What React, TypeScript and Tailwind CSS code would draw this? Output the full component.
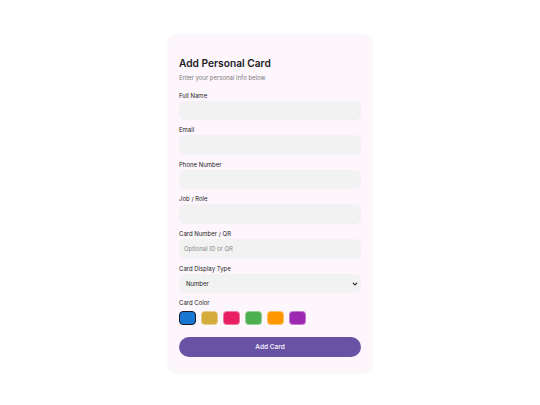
import React, { useState } from 'react';

const colors = ['#1976d2', '#d4ac3c', '#e91e63', '#4caf50', '#ff9800', '#9c27b0'];

const fields = [
  { label: 'Full Name', placeholder: '' },
  { label: 'Email', placeholder: '' },
  { label: 'Phone Number', placeholder: '' },
  { label: 'Job / Role', placeholder: '' },
  { label: 'Card Number / QR', placeholder: 'Optional ID or QR' },
];

export default function App() {
  const [selected, setSelected] = useState(0);

  return (
    <div
      className="w-full h-screen bg-white flex items-center justify-center"
      style={{ fontFamily: 'Inter, "Noto Sans", sans-serif' }}
    >
      <div className="w-[202px] h-[336px] bg-[#fdf6fd] rounded-[8px] shadow-[0_1px_4px_rgba(0,0,0,0.08)] px-[10px] pt-[21px] pb-[13px] flex flex-col">
        <h1 className="text-[10.2px] leading-[14px] font-semibold text-[#1c1b1f]">Add Personal Card</h1>
        <p className="mt-[3px] text-[6px] leading-[10px] text-[#7a7a7a]">Enter your personal info below</p>

        <div className="mt-[8px] flex flex-col">
          {fields.map((f) => (
            <div key={f.label} className="flex flex-col mb-[5.17px]">
              <label className="text-[6px] leading-[10px] text-[#222]">{f.label}</label>
              <div className="h-[19.5px] rounded-[6px] bg-[#f2f2f2] flex items-center px-[5px]">
                <span className="text-[6px] text-[#8a8a8a]">{f.placeholder}</span>
              </div>
            </div>
          ))}

          <div className="flex flex-col mb-[5.17px]">
            <label className="text-[6px] leading-[10px] text-[#222]">Card Display Type</label>
            <div className="h-[19.5px] rounded-[6px] bg-[#f2f2f2] flex items-center justify-between pl-[7px] pr-[3px]">
              <span className="text-[6px] text-[#222]">Number</span>
              <svg width="6" height="6" viewBox="0 0 10 10" fill="none">
                <path d="M2 3.5 L5 6.5 L8 3.5" stroke="#222" strokeWidth="1.8" strokeLinecap="round" strokeLinejoin="round" />
              </svg>
            </div>
          </div>

          <label className="text-[6px] leading-[10px] text-[#222]">Card Color</label>
          <div className="mt-[3px] flex gap-[5px]">
            {colors.map((c, i) => (
              <button
                key={c}
                onClick={() => setSelected(i)}
                className={
                  i === selected
                    ? 'w-[17px] h-[14px] rounded-[4px] border-[1.5px] border-[#1b1b2a]'
                    : 'w-[17px] h-[14px] rounded-[4px] border-[1.5px] border-white/40'
                }
                style={{ backgroundColor: c }}
              />
            ))}
          </div>

          <button className="mt-[12px] h-[20px] w-full rounded-full bg-[#6952a3] text-[6.5px] font-semibold text-[#efe9fb]">
            Add Card
          </button>
        </div>
      </div>
    </div>
  );
}
